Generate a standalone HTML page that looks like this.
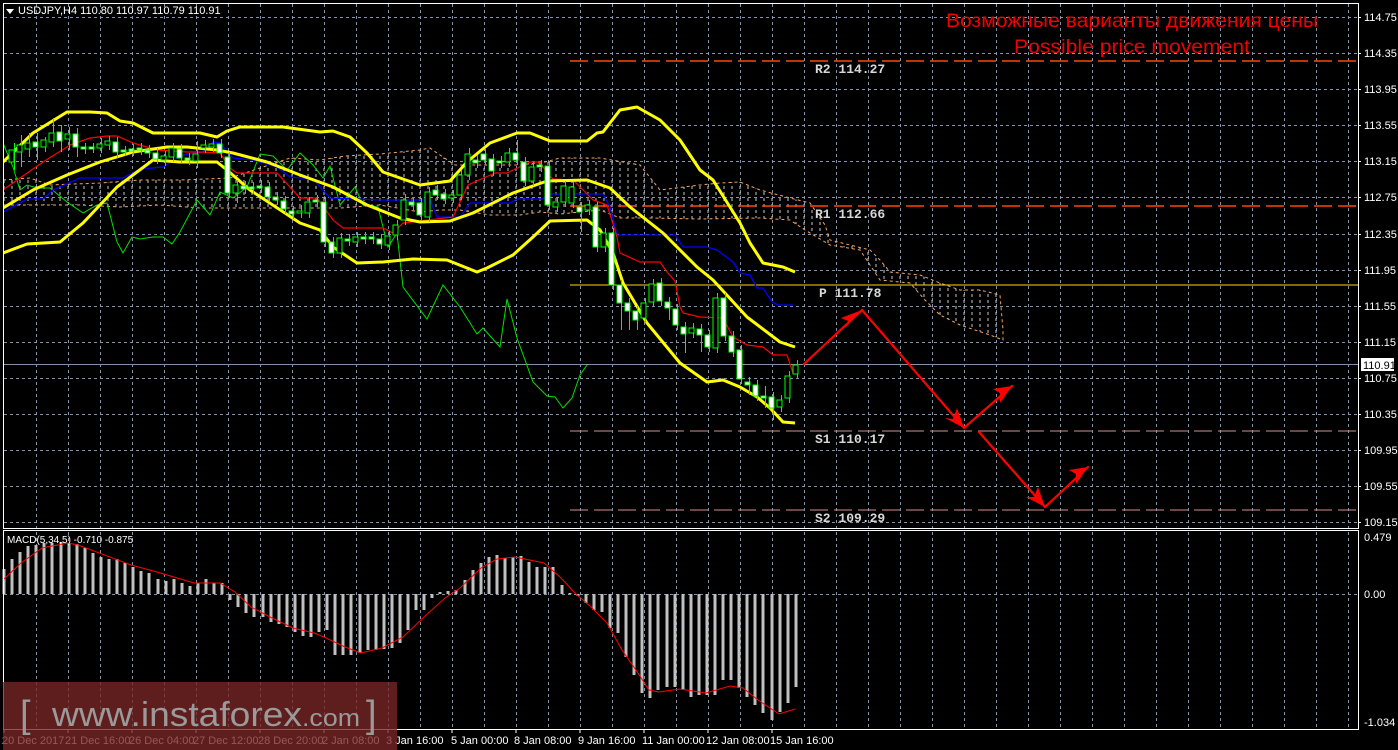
<!DOCTYPE html>
<html><head><meta charset="utf-8"><style>
html,body{margin:0;padding:0;background:#000;width:1398px;height:750px;overflow:hidden}
svg{display:block}
text{font-family:"Liberation Sans",sans-serif}
text.mono{font-family:"Liberation Mono",monospace}
</style></head><body>
<svg width="1398" height="750" viewBox="0 0 1398 750" xmlns="http://www.w3.org/2000/svg">
<defs>
<pattern id="hatch" width="8" height="6" patternUnits="userSpaceOnUse"><line x1="4" y1="0" x2="4" y2="3" stroke="#c8c8c8" stroke-width="1"/></pattern>
<clipPath id="mainclip"><rect x="4" y="4" width="1354" height="524"/></clipPath>
</defs>
<rect width="1398" height="750" fill="#000"/>
<g stroke="#8493a8" stroke-width="1" stroke-dasharray="3,3" fill="none">
<path d="M4 17.5H1358M4 53.5H1358M4 89.5H1358M4 125.5H1358M4 161.5H1358M4 197.5H1358M4 234.5H1358M4 270.5H1358M4 306.5H1358M4 342.5H1358M4 378.5H1358M4 414.5H1358M4 450.5H1358M4 486.5H1358M4 522.5H1358M4 594.5H1358"/>
<path d="M36.5 4V729M68.5 4V729M100.5 4V729M132.5 4V729M164.5 4V729M196.5 4V729M228.5 4V729M260.5 4V729M292.5 4V729M324.5 4V729M356.5 4V729M388.5 4V729M420.5 4V729M452.5 4V729M484.5 4V729M516.5 4V729M548.5 4V729M580.5 4V729M612.5 4V729M644.5 4V729M676.5 4V729M708.5 4V729M740.5 4V729M772.5 4V729M804.5 4V729M836.5 4V729M868.5 4V729M900.5 4V729M932.5 4V729M964.5 4V729M996.5 4V729M1028.5 4V729M1060.5 4V729M1092.5 4V729M1124.5 4V729M1156.5 4V729M1188.5 4V729M1220.5 4V729M1252.5 4V729M1284.5 4V729M1316.5 4V729M1348.5 4V729"/>
</g>
<g clip-path="url(#mainclip)">
<polygon points="3,180 30,178 50,185 100,183 140,180 180,180 230,178 260,168 290,158 320,160 345,156 380,154 420,150 430,148 440,155 455,165 490,165 520,165 545,162 560,158 600,158 640,165 660,190 700,185 720,183 740,182 760,190 790,198 810,203 825,225 830,240 850,245 870,250 880,260 890,272 920,275 940,283 960,290 980,290 1000,295 1003,330 1003,340 990,335 975,330 960,325 940,315 925,300 910,283 880,280 860,250 830,245 805,230 790,220 760,218 700,219 650,218 620,218 600,210 580,212 560,214 540,212 520,215 490,215 460,210 440,210 420,212 380,205 340,208 300,208 260,208 200,208 160,205 120,207 80,205 40,205 3,205" fill="url(#hatch)" stroke="#f4a460" stroke-width="1" stroke-dasharray="3,3"/>
<line x1="570" y1="61" x2="1358" y2="61" stroke="#ff4500" stroke-width="1.5" stroke-dasharray="18,6"/>
<line x1="570" y1="206" x2="1358" y2="206" stroke="#ff4500" stroke-width="1.5" stroke-dasharray="18,6"/>
<line x1="570" y1="285" x2="1358" y2="285" stroke="#ffd700" stroke-width="1"/>
<line x1="570" y1="431" x2="1358" y2="431" stroke="#d09090" stroke-width="1" stroke-dasharray="18,6"/>
<line x1="570" y1="510" x2="1358" y2="510" stroke="#d09090" stroke-width="1" stroke-dasharray="18,6"/>
<line x1="4" y1="364.5" x2="1358" y2="364.5" stroke="#8493a8" stroke-width="1"/>
<polyline fill="none" stroke="#00e000" stroke-width="1" points="3,143 13,167 20,190 27,185 37,188 50,188 67,202 83,213 97,205 107,203 117,242 123,253 132,237 140,239 153,237 163,237 172,244 180,232 197,200 210,215 220,192 233,198 247,187 260,154 273,156 287,170 300,153 313,165 323,178 330,166 340,205 355,187 363,205 378,207 388,247 397,233 403,287 427,319 443,285 460,307 477,334 483,328 500,347 507,299 517,338 533,382 547,396 555,397 563,408 572,398 580,375 587,365"/>
<polyline fill="none" stroke="#0000ff" stroke-width="1.3" points="3,212 27,199 43,199 53,190 80,178 123,178 140,169 163,167 177,158 187,154 203,152 213,142 220,143 233,158 253,160 277,167 290,177 313,179 330,198 380,200 430,200 437,217 460,217 470,203 510,203 517,199 543,199 548,194 603,194 610,207 617,235 675,235 683,247 707,247 717,250 733,262 740,273 750,275 757,288 763,288 772,302 778,305 793,305"/>
<polyline fill="none" stroke="#ff0000" stroke-width="1.2" points="3,190 20,178 43,162 70,145 90,138 107,136 117,136 133,143 157,150 187,152 200,152 220,153 230,168 237,173 277,173 300,198 317,198 333,220 343,228 383,228 393,233 403,223 420,221 453,217 468,185 495,173 507,173 530,162 540,162 547,173 553,179 573,180 593,200 607,205 617,237 620,253 640,262 660,262 667,272 675,281 680,307 683,313 700,317 723,318 733,337 747,345 763,347 773,355 787,355 793,373 798,364"/>
<g fill="none" stroke="#ffff00" stroke-width="3" stroke-linejoin="round">
<polyline points="3,162 33,133 67,112 90,112 107,113 120,121 133,123 153,133 200,133 217,137 227,131 240,127 283,127 320,132 333,131 350,137 367,153 383,172 420,185 450,181 467,162 490,143 517,133 530,133 550,141 587,141 597,133 603,132 620,110 637,107 660,120 680,140 700,170 713,180 740,223 750,243 763,263 783,267 795,272"/>
<polyline points="3,208 33,190 67,175 100,162 133,152 167,147 187,147 217,150 233,153 267,162 300,175 333,187 367,205 400,218 420,222 450,221 473,213 513,193 547,181 587,180 610,188 630,207 663,233 697,267 713,280 747,317 780,342 795,347"/>
<polyline points="3,253 27,244 60,242 83,223 117,187 153,160 180,162 217,162 227,170 250,190 300,223 320,230 333,247 357,263 383,262 413,259 447,260 477,272 487,268 513,255 533,237 550,221 587,220 600,230 613,253 623,283 647,323 680,363 707,382 723,380 740,387 757,397 770,408 783,422 795,423"/>
</g>
<g stroke="#00ff00" stroke-width="1">
<path d="M14.5 143V170M21.5 135V167M29.5 133V157M37.5 133V160M45.5 137V152M53.5 118V147M61.5 125V152M69.5 127V150M77.5 128V157M85.5 143V154M93.5 143V153M101.5 138V153M109.5 136V150M117.5 137V158M125.5 146V156M133.5 144V156M141.5 143V155M149.5 145V158M157.5 148V164M165.5 151V166M173.5 143V162M181.5 144V163M189.5 153V165M197.5 141V168M205.5 140V153M213.5 139V152M221.5 139V158M229.5 152V198M237.5 180V203M245.5 181V194M253.5 182V194M261.5 180V193M269.5 182V202M277.5 192V205M285.5 196V214M293.5 206V219M301.5 205V218M309.5 197V218M317.5 195V207M325.5 197V247M333.5 237V258M341.5 233V258M349.5 234V246M357.5 232V247M365.5 232V244M373.5 232V244M381.5 234V249M389.5 231V250M397.5 220V240M405.5 194V225M413.5 197V210M421.5 198V220M429.5 187V222M437.5 185V200M445.5 189V204M453.5 190V203M461.5 170V200M469.5 148V180M477.5 155V168M485.5 149V165M493.5 154V176M501.5 156V168M509.5 148V167M517.5 140V165M525.5 157V186M533.5 162V186M541.5 160V172M549.5 161V210M557.5 197V212M565.5 181V207M573.5 182V208M581.5 202V232M589.5 200V215M597.5 202V252M605.5 228V252M613.5 228V290M621.5 280V330M629.5 298V330M637.5 306V330M645.5 298V323M653.5 279V307M661.5 278V306M669.5 297V320M677.5 304V330M685.5 322V353M693.5 323V338M701.5 324V352M709.5 330V352M717.5 293V353M725.5 293V341M733.5 331V357M741.5 345V384M749.5 377V395M757.5 380V401M765.5 386V408M773.5 392V420M781.5 395V412M789.5 371V403M797.5 360V379"/>
<g fill="#fff">
<rect x="33" y="142" width="5" height="5"/><rect x="57" y="132" width="5" height="9"/><rect x="73" y="134" width="5" height="13"/><rect x="81" y="147" width="5" height="2"/><rect x="89" y="147" width="5" height="2"/><rect x="113" y="142" width="5" height="10"/><rect x="121" y="150" width="5" height="2"/><rect x="129" y="149" width="5" height="2"/><rect x="137" y="148" width="5" height="2"/><rect x="145" y="150" width="5" height="3"/><rect x="153" y="153" width="5" height="6"/><rect x="177" y="149" width="5" height="9"/><rect x="185" y="158" width="5" height="2"/><rect x="217" y="144" width="5" height="9"/><rect x="225" y="157" width="5" height="36"/><rect x="241" y="186" width="5" height="3"/><rect x="249" y="187" width="5" height="2"/><rect x="257" y="186" width="5" height="2"/><rect x="265" y="187" width="5" height="10"/><rect x="273" y="197" width="5" height="3"/><rect x="281" y="201" width="5" height="8"/><rect x="289" y="211" width="5" height="3"/><rect x="313" y="200" width="5" height="2"/><rect x="321" y="202" width="5" height="40"/><rect x="329" y="242" width="5" height="11"/><rect x="345" y="239" width="5" height="2"/><rect x="361" y="237" width="5" height="2"/><rect x="369" y="237" width="5" height="2"/><rect x="377" y="239" width="5" height="5"/><rect x="409" y="202" width="5" height="3"/><rect x="417" y="203" width="5" height="12"/><rect x="433" y="190" width="5" height="5"/><rect x="441" y="194" width="5" height="5"/><rect x="473" y="160" width="5" height="3"/><rect x="481" y="154" width="5" height="6"/><rect x="489" y="159" width="5" height="12"/><rect x="497" y="161" width="5" height="2"/><rect x="513" y="153" width="5" height="7"/><rect x="521" y="162" width="5" height="19"/><rect x="537" y="165" width="5" height="2"/><rect x="545" y="166" width="5" height="39"/><rect x="577" y="207" width="5" height="5"/><rect x="593" y="207" width="5" height="40"/><rect x="609" y="233" width="5" height="52"/><rect x="617" y="285" width="5" height="18"/><rect x="625" y="303" width="5" height="8"/><rect x="633" y="311" width="5" height="9"/><rect x="657" y="283" width="5" height="18"/><rect x="665" y="302" width="5" height="6"/><rect x="673" y="309" width="5" height="16"/><rect x="681" y="327" width="5" height="7"/><rect x="697" y="329" width="5" height="6"/><rect x="705" y="335" width="5" height="12"/><rect x="721" y="298" width="5" height="38"/><rect x="729" y="336" width="5" height="16"/><rect x="737" y="350" width="5" height="29"/><rect x="745" y="382" width="5" height="3"/><rect x="753" y="385" width="5" height="11"/><rect x="761" y="396" width="5" height="2"/><rect x="769" y="397" width="5" height="11"/>
</g>
<g fill="#000">
<rect x="9" y="150" width="5" height="12"/><rect x="17" y="145" width="5" height="7"/><rect x="25" y="143" width="5" height="6"/><rect x="41" y="140" width="5" height="7"/><rect x="49" y="133" width="5" height="9"/><rect x="65" y="134" width="5" height="5"/><rect x="97" y="144" width="5" height="4"/><rect x="105" y="141" width="5" height="4"/><rect x="161" y="156" width="5" height="4"/><rect x="169" y="148" width="5" height="9"/><rect x="193" y="154" width="5" height="7"/><rect x="201" y="145" width="5" height="3"/><rect x="209" y="144" width="5" height="3"/><rect x="233" y="185" width="5" height="8"/><rect x="297" y="211" width="5" height="2"/><rect x="305" y="202" width="5" height="11"/><rect x="337" y="238" width="5" height="15"/><rect x="353" y="237" width="5" height="5"/><rect x="385" y="236" width="5" height="9"/><rect x="393" y="225" width="5" height="10"/><rect x="401" y="200" width="5" height="20"/><rect x="425" y="192" width="5" height="25"/><rect x="449" y="195" width="5" height="3"/><rect x="457" y="175" width="5" height="20"/><rect x="465" y="154" width="5" height="21"/><rect x="505" y="153" width="5" height="9"/><rect x="529" y="167" width="5" height="14"/><rect x="553" y="202" width="5" height="5"/><rect x="561" y="186" width="5" height="16"/><rect x="569" y="187" width="5" height="16"/><rect x="585" y="205" width="5" height="5"/><rect x="601" y="233" width="5" height="14"/><rect x="641" y="303" width="5" height="15"/><rect x="649" y="284" width="5" height="18"/><rect x="689" y="328" width="5" height="5"/><rect x="713" y="298" width="5" height="50"/><rect x="777" y="400" width="5" height="7"/><rect x="785" y="376" width="5" height="22"/><rect x="793" y="365" width="5" height="9"/>
</g>
</g>
<g stroke="#ff0000" stroke-width="2.2" fill="none" stroke-linecap="round">
<polyline points="804,364 862,310 964,428 1012,386"/>
<polyline points="979,432 1045,507 1088,467"/>
</g>
<g fill="#ff0000">
<polygon points="862,310 841,318 848,321 845,328"/>
<polygon points="964,428 945,418 953,419 957,408"/>
<polygon points="1012,386 993,389 1000,393 1000,403"/>
<polygon points="1045,507 1026,497 1034,497 1038,487"/>
<polygon points="1088,467 1069,470 1076,474 1076,484"/>
</g>
</g>
<g fill="#d8d8d8" font-size="13" font-weight="bold">
<text class="mono" x="815" y="73">R2 114.27</text>
<text class="mono" x="815" y="218">R1 112.66</text>
<text class="mono" x="819" y="297">P 111.78</text>
<text class="mono" x="815" y="443">S1 110.17</text>
<text class="mono" x="815" y="522">S2 109.29</text>
</g>
<g fill="#f00000" font-size="19" text-anchor="middle">
<text x="1132" y="27" textLength="372" lengthAdjust="spacingAndGlyphs" style="font-family:'Liberation Sans','Noto Sans CJK SC',sans-serif">Возможные варианты движения цены</text>
<text x="1132" y="53" textLength="236" lengthAdjust="spacingAndGlyphs">Possible price movement</text>
</g>
<path stroke="#c0c0c0" stroke-width="3" fill="none" d="M4 594V569M12 594V559M20 594V552M28 594V546M36 594V545M44 594V543M52 594V543M61 594V542M69 594V543M77 594V544M85 594V548M93 594V553M101 594V557M109 594V559M117 594V559M125 594V563M133 594V567M141 594V571M149 594V573M158 594V579M166 594V581M174 594V579M182 594V583M190 594V586M198 594V583M206 594V579M214 594V583M222 594V583M230 594V600M238 594V607M246 594V613M254 594V617M263 594V617M271 594V622M279 594V624M287 594V627M295 594V632M303 594V636M311 594V637M319 594V632M327 594V630M335 594V655M343 594V655M351 594V655M360 594V653M368 594V650M376 594V650M384 594V649M392 594V648M400 594V643M408 594V630M416 594V610M424 594V610M432 594V598M440 594V592M448 594V591M456 594V590M465 594V580M473 594V570M481 594V563M489 594V557M497 594V555M505 594V558M513 594V557M521 594V556M529 594V562M537 594V567M545 594V567M553 594V567M562 594V585M570 594V593M578 594V596M586 594V603M594 594V610M602 594V612M610 594V628M618 594V633M626 594V657M634 594V675M642 594V693M650 594V698M658 594V690M667 594V687M675 594V687M683 594V690M691 594V697M699 594V695M707 594V695M715 594V695M723 594V680M731 594V680M739 594V688M747 594V697M755 594V705M763 594V713M772 594V720M780 594V712M788 594V703M796 594V687"/>
<polyline fill="none" stroke="#ff0000" stroke-width="1" points="4,579 21,563 42,548 68,543 78,545 131,565 157,572 194,583 220,583 235,592 251,607 272,618 293,628 314,633 324,637 345,647 361,653 382,648 403,637 424,617 445,598 460,588 481,568 497,559 515,557 544,563 560,577 575,593 591,607 607,623 622,650 638,673 649,690 659,692 680,689 706,693 730,686 743,688 758,700 779,714 795,709"/>
<text x="7" y="543" fill="#fff" font-size="10">MACD(5,34,5) -0.710 -0.875</text>
<rect x="3.5" y="3.5" width="1355" height="525" fill="none" stroke="#fff" stroke-width="1"/>
<rect x="3.5" y="530.5" width="1355" height="199" fill="none" stroke="#fff" stroke-width="1"/>
<polygon points="6,9 14,9 10,14" fill="#fff"/>
<text x="18" y="14" fill="#fff" font-size="11">USDJPY,H4  110.80 110.97 110.79 110.91</text>
<g fill="#fff" font-size="11">
<text x="1364" y="21">114.75</text><text x="1364" y="57">114.35</text><text x="1364" y="93">113.95</text><text x="1364" y="129">113.55</text><text x="1364" y="165">113.15</text><text x="1364" y="201">112.75</text><text x="1364" y="238">112.35</text><text x="1364" y="274">111.95</text><text x="1364" y="310">111.55</text><text x="1364" y="346">111.15</text><text x="1364" y="382">110.75</text><text x="1364" y="418">110.35</text><text x="1364" y="454">109.95</text><text x="1364" y="490">109.55</text><text x="1364" y="526">109.15</text>
<text x="1364" y="541">0.479</text><text x="1364" y="598">0.00</text><text x="1364" y="726">-1.034</text>
</g>
<path stroke="#fff" d="M1358 17.5h3M1358 53.5h3M1358 89.5h3M1358 125.5h3M1358 161.5h3M1358 197.5h3M1358 234.5h3M1358 270.5h3M1358 306.5h3M1358 342.5h3M1358 378.5h3M1358 414.5h3M1358 450.5h3M1358 486.5h3M1358 522.5h3"/>
<rect x="1361" y="358" width="33" height="13" fill="#fff"/>
<text x="1363" y="369" fill="#000" font-size="11">110.91</text>
<path stroke="#fff" d="M4 729v4M68 729v4M132 729v4M196 729v4M260 729v4M324 729v4M388 729v4M452 729v4M516 729v4M580 729v4M644 729v4M708 729v4M772 729v4"/>
<g fill="#fff" font-size="11">
<text x="2" y="744">20 Dec 2017</text><text x="65" y="744">21 Dec 16:00</text><text x="129" y="744">26 Dec 04:00</text><text x="193" y="744">27 Dec 12:00</text><text x="258" y="744">28 Dec 20:00</text><text x="322" y="744">2 Jan 08:00</text><text x="386" y="744">3 Jan 16:00</text><text x="451" y="744">5 Jan 00:00</text><text x="514" y="744">8 Jan 08:00</text><text x="578" y="744">9 Jan 16:00</text><text x="642" y="744">11 Jan 00:00</text><text x="706" y="744">12 Jan 08:00</text><text x="770" y="744">15 Jan 16:00</text>
</g>
<rect x="3" y="682" width="394" height="68" fill="#7a2626" fill-opacity="0.78"/>
<g fill="#9a9a9a">
<text x="20" y="727" font-size="38" font-weight="300">[</text>
<text x="52" y="726" font-size="34" textLength="250" lengthAdjust="spacingAndGlyphs">www.instaforex</text>
<text x="302" y="726" font-size="24" textLength="58" lengthAdjust="spacingAndGlyphs">.com</text>
<text x="366" y="727" font-size="38" font-weight="300">]</text>
</g>
</svg>
</body></html>
